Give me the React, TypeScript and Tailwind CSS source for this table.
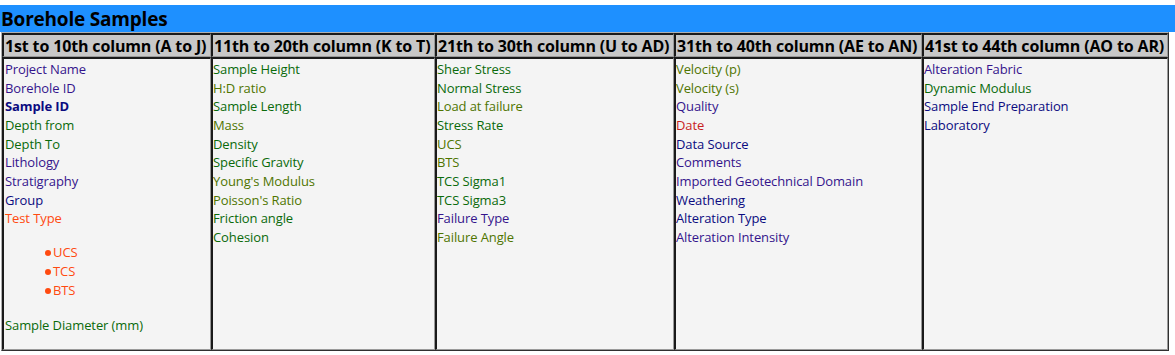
import React from "react";

type Item = { t: string; c: string; b?: boolean };

const IND = "text-[#34148c]";
const NAV = "text-[#0b0b80]";
const GRN = "text-[#0a6a0a]";
const OLV = "text-[#4f7400]";
const ORG = "text-[#ff4a10]";
const RED = "text-[#c81e1e]";

const col1: Item[] = [
  { t: "Project Name", c: IND },
  { t: "Borehole ID", c: IND },
  { t: "Sample ID", c: NAV, b: true },
  { t: "Depth from", c: GRN },
  { t: "Depth To", c: GRN },
  { t: "Lithology", c: IND },
  { t: "Stratigraphy", c: IND },
  { t: "Group", c: NAV },
  { t: "Test Type", c: ORG },
];
const col2: Item[] = [
  { t: "Sample Height", c: GRN },
  { t: "H:D ratio", c: OLV },
  { t: "Sample Length", c: GRN },
  { t: "Mass", c: OLV },
  { t: "Density", c: GRN },
  { t: "Specific Gravity", c: GRN },
  { t: "Young's Modulus", c: OLV },
  { t: "Poisson's Ratio", c: OLV },
  { t: "Friction angle", c: GRN },
  { t: "Cohesion", c: GRN },
];
const col3: Item[] = [
  { t: "Shear Stress", c: GRN },
  { t: "Normal Stress", c: GRN },
  { t: "Load at failure", c: OLV },
  { t: "Stress Rate", c: GRN },
  { t: "UCS", c: OLV },
  { t: "BTS", c: OLV },
  { t: "TCS Sigma1", c: GRN },
  { t: "TCS Sigma3", c: GRN },
  { t: "Failure Type", c: IND },
  { t: "Failure Angle", c: OLV },
];
const col4: Item[] = [
  { t: "Velocity (p)", c: OLV },
  { t: "Velocity (s)", c: OLV },
  { t: "Quality", c: IND },
  { t: "Date", c: RED },
  { t: "Data Source", c: NAV },
  { t: "Comments", c: IND },
  { t: "Imported Geotechnical Domain", c: IND },
  { t: "Weathering", c: NAV },
  { t: "Alteration Type", c: NAV },
  { t: "Alteration Intensity", c: IND },
];
const col5: Item[] = [
  { t: "Alteration Fabric", c: IND },
  { t: "Dynamic Modulus", c: GRN },
  { t: "Sample End Preparation", c: NAV },
  { t: "Laboratory", c: NAV },
];

const headers = [
  "1st to 10th column (A to J)",
  "11th to 20th column (K to T)",
  "21th to 30th column (U to AD)",
  "31th to 40th column (AE to AN)",
  "41st to 44th column (AO to AR)",
];

const font = { fontFamily: '"Open Sans", "Noto Sans", "Liberation Sans", sans-serif' };

function List({ items }: { items: Item[] }) {
  return (
    <div className="flex flex-col">
      {items.map((it) => (
        <div
          key={it.t}
          className={`leading-[18.67px] whitespace-nowrap ${it.c} ${it.b ? "font-bold" : ""}`}
        >
          {it.t}
        </div>
      ))}
    </div>
  );
}

const cellCls =
  "border-l-2 border-t-2 border-l-[#1a1a1a] border-t-[#1a1a1a] border-r border-b border-r-[#9a9a9a] border-b-[#9a9a9a]";

const bodyCls = `${cellCls} bg-[#f4f4f4] text-[13px] pt-[1px] tracking-[-0.1px]`;

export default function App() {
  return (
    <div className="bg-white w-[1175px] h-[355px] pt-[5px]" style={font}>
      <div className="bg-[#1e90ff] h-[27px] pl-[1px] pt-[1px] flex items-center">
        <span className="text-[19px] font-bold text-black leading-none tracking-[-0.2px]">
          Borehole Samples
        </span>
      </div>
      <div className="ml-[1px] w-[1168px] border border-t-[#b0b0b0] border-l-[#b0b0b0] border-r-[#303030] border-b-[#303030] grid grid-cols-[209px_224px_239px_248px_246px] grid-rows-[24px_293px]">
        {headers.map((h) => (
          <div
            key={h}
            className={`${cellCls} bg-[#c8c8c8] text-[16px] font-bold text-black whitespace-nowrap flex items-center pl-[1px] pt-[1px] tracking-[-0.15px]`}
          >
            {h}
          </div>
        ))}
        <div className={`${bodyCls} pl-[1px]`}>
          <List items={col1} />
          <ul className="mt-[15px] pl-[40px] flex flex-col">
            {["UCS", "TCS", "BTS"].map((u) => (
              <li key={u} className={`leading-[19px] ${ORG} flex items-center`}>
                <span className="inline-block w-[6px] h-[6px] rounded-full bg-[#ff4a10] mr-[2px]" />
                {u}
              </li>
            ))}
          </ul>
          <div className={`mt-[16px] leading-[18.67px] ${GRN}`}>Sample Diameter (mm)</div>
        </div>
        <div className={bodyCls}>
          <List items={col2} />
        </div>
        <div className={bodyCls}>
          <List items={col3} />
        </div>
        <div className={bodyCls}>
          <List items={col4} />
        </div>
        <div className={bodyCls}>
          <List items={col5} />
        </div>
      </div>
    </div>
  );
}
